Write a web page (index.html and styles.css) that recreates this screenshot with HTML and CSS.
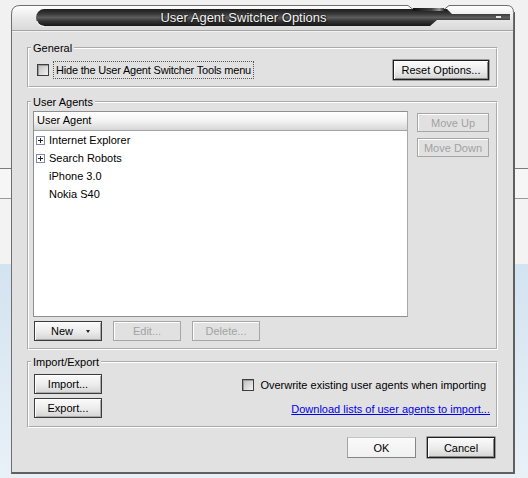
FILE: index.html
```html
<!DOCTYPE html>
<html>
    <head>
        <meta charset="UTF-8">
        <title>User Agent Switcher Options</title>
        <link rel="stylesheet" href="styles.css">
    </head>
    <body>
        <div class="window">
            <!--title bar-->
            <div class="titlebar">
                <svg class="skin" width="504" height="27" viewBox="0 0 504 27">
                    <defs>
                        <linearGradient id="frame" x1="0" y1="0" x2="0" y2="1">
                            <stop offset="0" stop-color="#ffffff"/>
                            <stop offset="0.5" stop-color="#e8e8e8"/>
                            <stop offset="1" stop-color="#d8d8d8"/>
                        </linearGradient>
                        <linearGradient id="bar" gradientUnits="userSpaceOnUse" x1="0" y1="5" x2="0" y2="22">
                            <stop offset="0" stop-color="#1c1c1c"/>
                            <stop offset="0.3" stop-color="#3a3a3a"/>
                            <stop offset="0.5" stop-color="#5e5e5e"/>
                            <stop offset="0.7" stop-color="#363636"/>
                            <stop offset="1" stop-color="#161616"/>
                        </linearGradient>
                        <linearGradient id="notch" x1="0" y1="0" x2="1" y2="0">
                            <stop offset="0" stop-color="#111"/>
                            <stop offset="0.6" stop-color="#444"/>
                            <stop offset="0.85" stop-color="#999"/>
                            <stop offset="1" stop-color="#333"/>
                        </linearGradient>
                    </defs>
                    <path d="M0.5,27 V10 Q0.5,1.5 9,1.5 H397 L402,5.5 H433 L438,1.5 H496 Q502.5,1.5 502.5,8.5 V27 Z" fill="url(#frame)" stroke="#6e6e6e"/>
                    <line x1="503.5" y1="8" x2="503.5" y2="27" stroke="#5a5a5a"/>
                    <path d="M33.5,5 H436 L441,10 H499 V16 H426 L419,22 H33.5 A8.5,8.5 0 0 1 33.5,5 Z" fill="url(#bar)"/>
                    <rect x="402" y="4" width="31" height="3" fill="url(#notch)"/>
                    <path d="M26,17 A8,8 0 0 0 33.5,22.5" fill="none" stroke="#f4f4f4"/>
                    <rect x="485" y="12" width="5" height="2" fill="#e6e6e6"/>
                </svg>
                <div class="title">User Agent Switcher Options</div>
            </div>
            <!--dialog body-->
            <div class="content">
                <fieldset class="group">
                    <legend>General</legend>
                    <div class="general-body">
                        <label class="check">
                            <span class="box"></span>
                            <span class="focus">Hide the User Agent Switcher Tools menu</span>
                        </label>
                        <button class="btn strong reset">Reset Options...</button>
                    </div>
                </fieldset>

                <fieldset class="group agents">
                    <legend>User Agents</legend>
                    <div class="agents-body">
                        <div class="agents-left">
                            <div class="list">
                                <div class="list-head">User Agent</div>
                                <div class="list-row"><svg class="twisty" width="9" height="9" viewBox="0 0 9 9"><rect x="0.5" y="0.5" width="8" height="8" fill="#fff" stroke="#8686a8"/><path d="M2,4.5 H7 M4.5,2 V7" stroke="#222"/></svg>Internet Explorer</div>
                                <div class="list-row"><svg class="twisty" width="9" height="9" viewBox="0 0 9 9"><rect x="0.5" y="0.5" width="8" height="8" fill="#fff" stroke="#8686a8"/><path d="M2,4.5 H7 M4.5,2 V7" stroke="#222"/></svg>Search Robots</div>
                                <div class="list-row leaf">iPhone 3.0</div>
                                <div class="list-row leaf">Nokia S40</div>
                            </div>
                            <div class="list-buttons">
                                <button class="btn new">New<span class="arrow"></span></button>
                                <button class="btn small" disabled>Edit...</button>
                                <button class="btn small" disabled>Delete...</button>
                            </div>
                        </div>
                        <div class="agents-right">
                            <button class="btn move" disabled>Move Up</button>
                            <button class="btn move" disabled>Move Down</button>
                        </div>
                    </div>
                </fieldset>

                <fieldset class="group transfer">
                    <legend>Import/Export</legend>
                    <div class="transfer-body">
                        <div class="transfer-left">
                            <button class="btn small">Import...</button>
                            <button class="btn small">Export...</button>
                        </div>
                        <div class="transfer-right">
                            <label class="check overwrite">
                                <span class="box"></span>
                                <span>Overwrite existing user agents when importing</span>
                            </label>
                            <a class="download" href="#">Download lists of user agents to import...</a>
                        </div>
                    </div>
                </fieldset>

                <div class="actions">
                    <button class="btn ok">OK</button>
                    <button class="btn strong cancel">Cancel</button>
                </div>
            </div>
        </div>
    </body>
</html>
```

FILE: styles.css
```css
html, body{
    margin: 0;
    height: 100%;
}
body{
    font-family: "Liberation Sans", Arial, sans-serif;
    font-size: 11px;
    color: black;
    overflow: hidden;
    background: linear-gradient(to bottom,
        #f1f1f1 0, #f1f1f1 168px,
        #7c7c7c 168px, #7c7c7c 169px,
        #f6f6f6 169px, #f6f6f6 198px,
        #9a9a9a 198px, #9a9a9a 199px,
        #f3f3f3 199px, #f3f3f3 264px,
        #d3e3f0 264px, #e9f1f7 100%);
}
.window{
    width: 504px;
    margin: 4px 0 0 11px;
}
.titlebar{
    position: relative;
    height: 27px;
}
.titlebar .skin{
    position: absolute;
    left: 0;
    top: 0;
}
.title{
    position: relative;
    margin-left: 25px;
    width: 415px;
    padding-top: 6px;
    text-align: center;
    font-size: 13px;
    line-height: 16px;
    color: #f4f4f4;
    text-shadow: 0 0 2px #000, 1px 1px 1px #222;
}
.content{
    height: 443px;
    box-sizing: border-box;
    padding: 10px 15px 0;
    background-color: #e1e1e1;
    border-left: 1px solid #6e6e6e;
    border-right: 2px solid #606060;
    border-bottom: 2px solid #606060;
    box-shadow: inset 0 1px #f2f2f2;
}

/* group boxes */
.group{
    margin: 0;
    padding: 0;
    min-width: 0;
    border: 2px groove #ffffff;
}
.group legend{
    margin-left: 2px;
    padding: 0 2px;
    line-height: 14px;
}
.agents{
    margin-top: 7px;
}
.transfer{
    margin-top: 5px;
}

/* buttons */
.btn{
    font: inherit;
    box-sizing: border-box;
    height: 20px;
    padding: 0;
    color: black;
    border: 1px solid #3c3c3c;
    background: linear-gradient(#fbfbfb, #ebebeb 55%, #d4d4d4);
    box-shadow: inset 1px 1px #ffffff, inset -1px -1px #a9a9a9;
}
.btn:disabled{
    color: #a2a2a2;
    border-color: #a6a6a6;
    background: #e1e1e1;
    box-shadow: inset 1px 1px #ffffff;
}
.btn.strong{
    border-color: #1e1e1e;
    box-shadow: inset 1px 1px #ffffff, inset -1px -1px #8a8a8a, 0 0 0 0.5px #555;
}
.btn.small{
    width: 68px;
}
.reset{
    width: 96px;
}
.move{
    width: 72px;
    height: 19px;
}
.new{
    width: 68px;
    display: flex;
    align-items: center;
    padding-left: 16px;
}
.new .arrow{
    margin-left: 13px;
    border-left: 2.5px solid transparent;
    border-right: 2.5px solid transparent;
    border-top: 3px solid #222;
}
.ok{
    width: 69px;
    height: 21px;
    border-color: #c4c4c4 #858585 #858585 #a4a4a4;
    background: linear-gradient(#fafafa, #f0f0f0);
    box-shadow: none;
}
.cancel{
    width: 68px;
    height: 21px;
}

/* checkboxes */
.check{
    display: flex;
    align-items: center;
}
.check .box{
    width: 12px;
    height: 12px;
    box-sizing: border-box;
    border: 1px solid #3e3e3e;
    background: linear-gradient(135deg, #bdbdbd, #f3f3f3);
    box-shadow: inset 1px 1px #9a9a9a;
    margin-right: 4px;
}
.check .focus{
    border: 1px dotted #555;
    padding: 1px 2px;
    line-height: 14px;
    letter-spacing: -0.2px;
}

/* general */
.general-body{
    display: flex;
    justify-content: space-between;
    align-items: center;
    padding: 5px 7px 6px 8px;
}

/* user agents */
.agents-body{
    display: flex;
    gap: 9px;
    padding: 2px 7px 7px 4px;
}
.list{
    width: 375px;
    height: 206px;
    box-sizing: border-box;
    border: 1px solid #8f8f8f;
    border-right-color: #a8a8a8;
    background: white;
}
.list-head{
    height: 19px;
    box-sizing: border-box;
    line-height: 17px;
    padding-left: 3px;
    background: linear-gradient(#ffffff, #f3f3f3 50%, #d6d6d6);
    border-bottom: 1px solid #a4a4a4;
}
.list-row{
    height: 18px;
    display: flex;
    align-items: center;
    padding-left: 2px;
}
.list-row .twisty{
    margin-right: 4px;
}
.list-row.leaf{
    padding-left: 15px;
}
.list-buttons{
    display: flex;
    gap: 11px;
    margin-top: 4px;
    padding-left: 1px;
}
.list-buttons .btn{
    width: 68px;
}
.agents-right{
    display: flex;
    flex-direction: column;
    gap: 6px;
    padding-top: 2px;
}

/* import / export */
.transfer-body{
    display: flex;
    padding: 5px 0 8px 5px;
}
.transfer-left{
    display: flex;
    flex-direction: column;
    gap: 4px;
}
.transfer-right{
    flex: 1;
    display: flex;
    flex-direction: column;
    align-items: flex-end;
}
.overwrite{
    margin-top: 4px;
    margin-right: 10px;
    line-height: 14px;
}
.overwrite .box{
    margin-right: 6px;
}
.download{
    margin-top: 10px;
    margin-right: 6px;
    line-height: 14px;
    color: #0000e6;
    text-decoration: underline;
}

/* dialog buttons */
.actions{
    display: flex;
    justify-content: flex-end;
    gap: 11px;
    margin-top: 9px;
    padding-right: 3px;
}
```
